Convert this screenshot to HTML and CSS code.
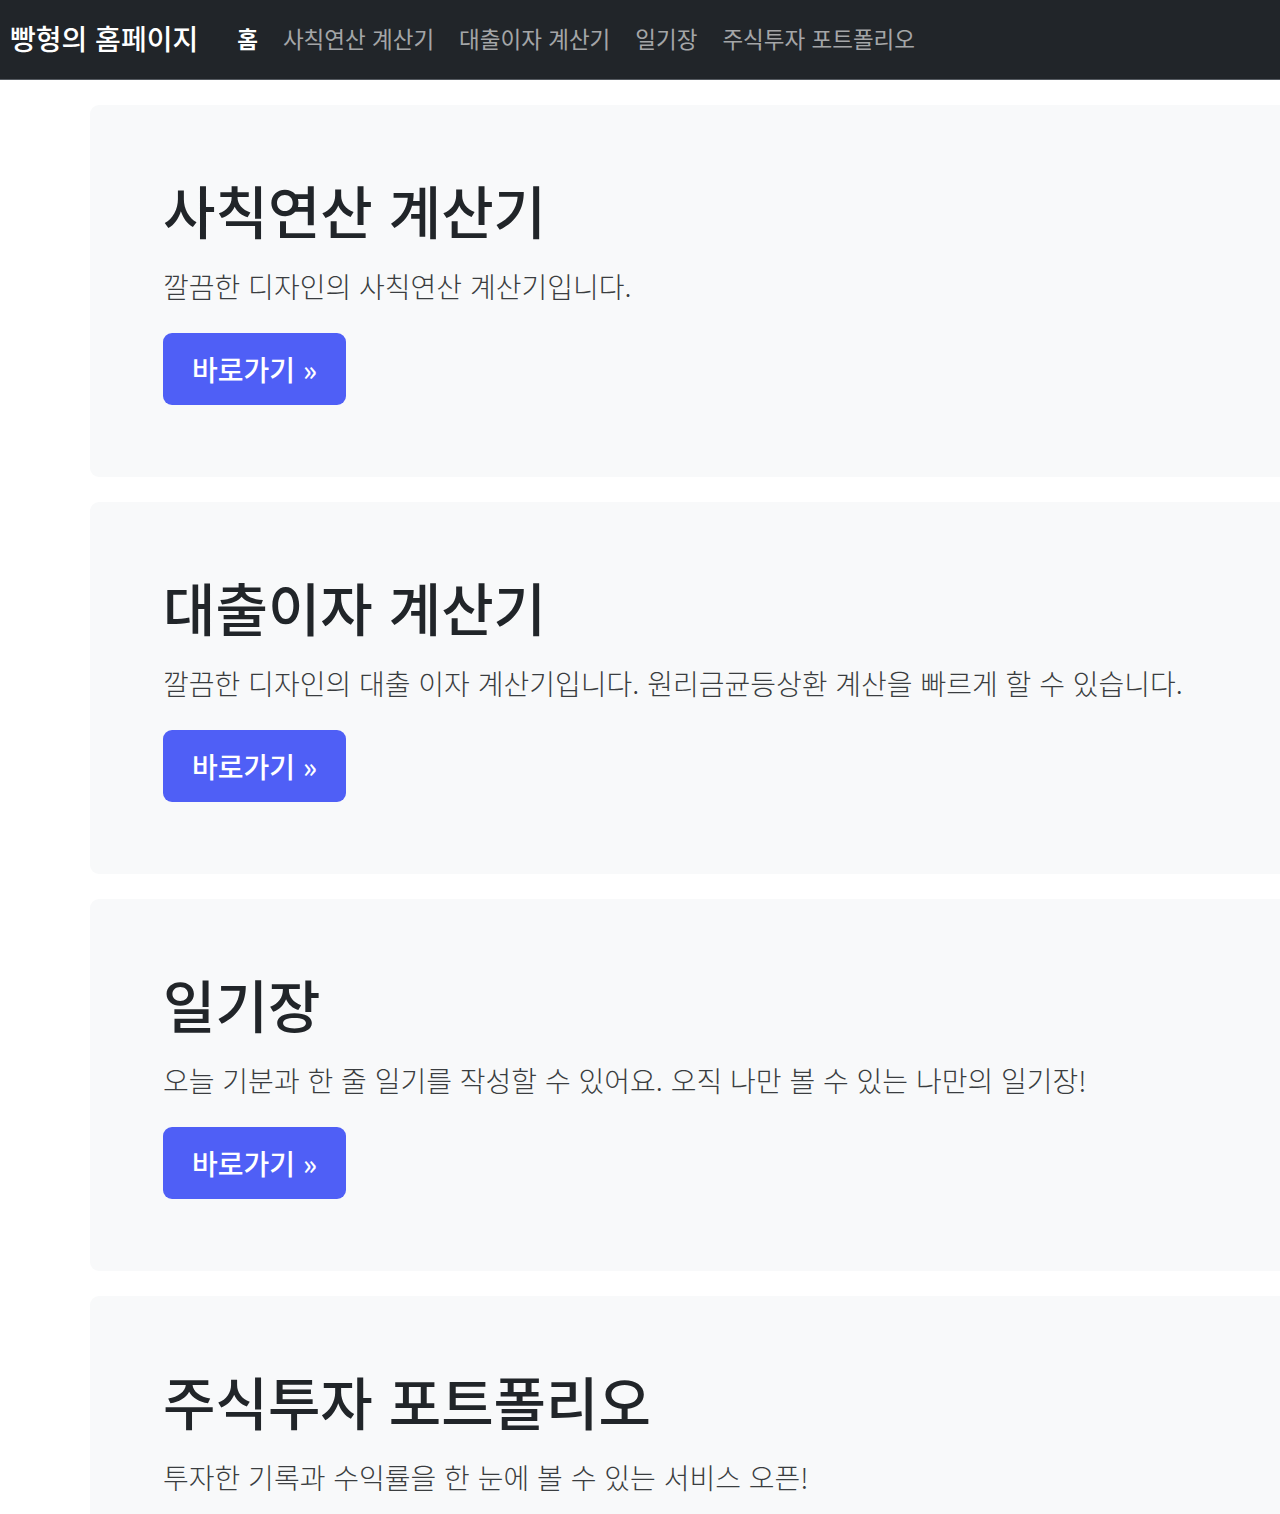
FILE: index.html
```html
<!DOCTYPE html>
<html lang="ko">
<head>
  <meta charset="UTF-8">
  <title>빵형의 홈페이지</title>
  <link rel="stylesheet" href="styles.css">
</head>
<body>
  <nav class="navbar">
    <a class="brand" href="#">빵형의 홈페이지</a>
    <ul class="nav-links">
      <li><a class="active" href="#">홈</a></li>
      <li><a href="#">사칙연산 계산기</a></li>
      <li><a href="#">대출이자 계산기</a></li>
      <li><a href="#">일기장</a></li>
      <li><a href="#">주식투자 포트폴리오</a></li>
    </ul>
  </nav>

  <main class="content">
    <section class="jumbo">
      <h1>사칙연산 계산기</h1>
      <p>깔끔한 디자인의 사칙연산 계산기입니다.</p>
      <a class="btn" href="#">바로가기 &raquo;</a>
    </section>

    <section class="jumbo">
      <h1>대출이자 계산기</h1>
      <p>깔끔한 디자인의 대출 이자 계산기입니다. 원리금균등상환 계산을 빠르게 할 수 있습니다.</p>
      <a class="btn" href="#">바로가기 &raquo;</a>
    </section>

    <section class="jumbo">
      <h1>일기장</h1>
      <p>오늘 기분과 한 줄 일기를 작성할 수 있어요. 오직 나만 볼 수 있는 나만의 일기장!</p>
      <a class="btn" href="#">바로가기 &raquo;</a>
    </section>

    <section class="jumbo">
      <h1>주식투자 포트폴리오</h1>
      <p>투자한 기록과 수익률을 한 눈에 볼 수 있는 서비스 오픈!</p>
      <a class="btn" href="#">바로가기 &raquo;</a>
    </section>
  </main>
</body>
</html>
```

FILE: styles.css
```css
body {
  margin: 0;
  font-family: "Noto Sans CJK KR", "Noto Sans", sans-serif;
  color: #212529;
  background: #fff;
  overflow: hidden;
}
a {
  text-decoration: none;
}
.navbar {
  display: flex;
  align-items: center;
  height: 75px;
  padding: 0 10px 4px;
  background: #212529;
  border-bottom: 1px solid #555a60;
}
.brand {
  color: #fff;
  font-size: 28px;
  font-weight: 500;
  margin-right: 39px;
}
.nav-links {
  display: flex;
  gap: 25px;
  list-style: none;
  margin: 0;
  padding: 0;
}
.nav-links a {
  color: rgba(255, 255, 255, 0.6);
  font-size: 22.5px;
}
.nav-links a.active {
  color: #fff;
  font-weight: 700;
}
.content {
  padding: 25px 0 0 90px;
}
.jumbo {
  width: 1220px;
  box-sizing: border-box;
  padding: 72px 73px;
  margin-bottom: 25px;
  background: #f8f9fa;
  border-radius: 9px;
}
.jumbo h1 {
  margin: 0 0 26px;
  font-size: 57px;
  line-height: 65px;
  font-weight: 500;
}
.jumbo p {
  margin: 0 0 29px;
  font-size: 28px;
  line-height: 36px;
  font-weight: 300;
  color: #3a3d40;
}
.btn {
  display: inline-flex;
  align-items: center;
  justify-content: center;
  width: 183px;
  height: 72px;
  box-sizing: border-box;
  background: #4f5ff6;
  color: #fff;
  font-size: 28px;
  font-weight: 500;
  border-radius: 9px;
}
```
